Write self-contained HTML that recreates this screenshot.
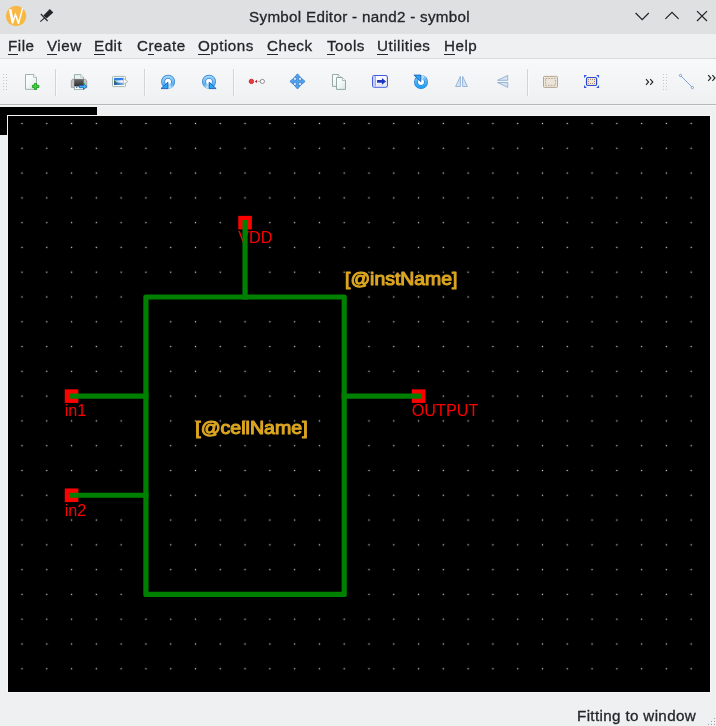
<!DOCTYPE html>
<html lang="en">
<head>
<meta charset="utf-8">
<title>Symbol Editor - nand2 - symbol</title>
<style>
*{box-sizing:border-box;margin:0;padding:0}
html,body{width:716px;height:726px;overflow:hidden}
body{position:relative;background:#eff0f1;font-family:"Liberation Sans","DejaVu Sans",sans-serif;color:#232629;font-size:15.2px;letter-spacing:0.5px}
.abs{position:absolute}
#titlebar{left:0;top:0;width:716px;height:34px;background:#dfe0e2}
#title{left:0;top:0;width:716px;height:33px;line-height:33px;text-align:center;letter-spacing:0.3px;padding-left:3px;white-space:nowrap}
#menubar{left:0;top:34px;width:716px;height:24px;background:#eff0f1}
.mi{position:absolute;top:37px;height:18px;line-height:18px;white-space:nowrap}
.mi u{text-decoration:none;border-bottom:1px solid #232629;padding-bottom:0}
#toolbar{left:0;top:59px;width:716px;height:45px;background:linear-gradient(#f8f9fa,#eff0f1)}
#tbline1{left:0;top:58px;width:716px;height:1px;background:#d9dadb}
#tbsep{left:0;top:104px;width:716px;height:1px;background:#b7b8b9}
#tbsep2{left:0;top:105px;width:716px;height:1px;background:#f7f8f8}
.vsep{position:absolute;top:69px;width:1px;height:27px;background:#d3d4d5}
.vsep:after{content:"";position:absolute;left:1px;top:0;width:1px;height:27px;background:#fafafa}
#blackbar{left:0;top:107px;width:97px;height:28px;background:#000}
#frame{left:7px;top:115px;width:704px;height:578px;background:#f6f6f7}
#canvas{left:8px;top:116px;width:702px;height:576px;background:#000}
#status{right:20px;top:706.5px;height:18px;line-height:18px;letter-spacing:0.35px;white-space:nowrap}
svg{position:absolute;overflow:visible;letter-spacing:0;will-change:transform}
#title,.mi,#status{-webkit-text-stroke:0.3px #232629;will-change:transform}
</style>
</head>
<body>
<div id="titlebar" class="abs"></div>
<div id="title" class="abs">Symbol Editor - nand2 - symbol</div>
<div id="menubar" class="abs"></div>
<div class="mi" style="left:7.6px"><u>F</u>ile</div>
<div class="mi" style="left:46.5px"><u>V</u>iew</div>
<div class="mi" style="left:94.3px"><u>E</u>dit</div>
<div class="mi" style="left:137px">C<u>r</u>eate</div>
<div class="mi" style="left:198px"><u>O</u>ptions</div>
<div class="mi" style="left:267px"><u>C</u>heck</div>
<div class="mi" style="left:326.8px"><u>T</u>ools</div>
<div class="mi" style="left:377px"><u>U</u>tilities</div>
<div class="mi" style="left:443.5px"><u>H</u>elp</div>
<div id="toolbar" class="abs"></div>
<div id="tbline1" class="abs"></div>
<div id="tbsep" class="abs"></div>
<div id="tbsep2" class="abs"></div>
<div class="vsep" style="left:55px"></div>
<div class="vsep" style="left:144px"></div>
<div class="vsep" style="left:233px"></div>
<div class="vsep" style="left:527px"></div>
<svg id="ico" style="left:0;top:0" width="716" height="726" viewBox="0 0 716 726">
<defs>
<linearGradient id="gPage" x1="0" y1="0" x2="1" y2="1"><stop offset="0" stop-color="#ffffff"/><stop offset="0.5" stop-color="#f1f8f7"/><stop offset="1" stop-color="#d6e7e4"/></linearGradient>
<linearGradient id="gBlue" x1="0" y1="0" x2="0" y2="1"><stop offset="0" stop-color="#8cc6f0"/><stop offset="1" stop-color="#2f86d4"/></linearGradient>
<linearGradient id="gBlue2" x1="0" y1="0" x2="0" y2="1"><stop offset="0" stop-color="#6fb3ea"/><stop offset="1" stop-color="#1f8fe0"/></linearGradient>
<linearGradient id="gOr" x1="0" y1="0" x2="1" y2="1"><stop offset="0" stop-color="#f9b54c"/><stop offset="1" stop-color="#f5bb3e"/></linearGradient>
<linearGradient id="gPr" x1="0" y1="0" x2="0" y2="1"><stop offset="0" stop-color="#6a6a6a"/><stop offset="1" stop-color="#2a2a2a"/></linearGradient>
<linearGradient id="gImg" x1="0" y1="0" x2="0" y2="1"><stop offset="0" stop-color="#2f6fd0"/><stop offset="0.5" stop-color="#8fc0e8"/><stop offset="0.55" stop-color="#3d7a4a"/><stop offset="1" stop-color="#1c5aa8"/></linearGradient>
<linearGradient id="gSea" x1="0" y1="0" x2="1" y2="0"><stop offset="0" stop-color="#1d4a9c"/><stop offset="1" stop-color="#86c4f0"/></linearGradient>
<linearGradient id="gFade" x1="0" y1="0" x2="1" y2="0"><stop offset="0" stop-color="#ffffff" stop-opacity="0"/><stop offset="0.7" stop-color="#ffffff" stop-opacity="1"/></linearGradient>
<linearGradient id="gRingA" x1="0" y1="0" x2="0" y2="1"><stop offset="0" stop-color="#9ad4f8"/><stop offset="1" stop-color="#4ea6ea"/></linearGradient>
<linearGradient id="gRingB" x1="0" y1="0" x2="0" y2="1"><stop offset="0" stop-color="#1ea2f6"/><stop offset="1" stop-color="#7cc0f0"/></linearGradient>
</defs>
<!-- app icon -->
<circle cx="16.1" cy="16" r="10.2" fill="url(#gOr)"/>
<path d="M8.8 9.4 L11.4 9.0 L13.3 18.8 L15.4 12.4 L18.6 20.6 L22.1 7.8 L23.3 8.2 L19.1 24.1 L17.9 24.1 L15.3 16.6 L13.3 23.6 L11.8 23.6 Z" fill="#fff"/>
<!-- pin -->
<g fill="#232629" stroke="none">
<path d="M49.8 9 L53.3 12.4 L46.6 18.6 L43.4 15.4 Z"/>
<path d="M41.2 13.6 L48 20.6 L47.2 21.4 L40.4 14.4 Z"/>
<path d="M44.6 17.2 L45.4 18 L40.6 22 L39.9 21.3 Z"/>
</g>
<!-- window buttons -->
<g fill="none" stroke="#232629" stroke-width="1.25">
<path d="M635.6 13 L642.2 19.6 L648.8 13"/>
<path d="M665.4 18.9 L672 12.3 L678.6 18.9"/>
<path d="M697 11.1 L707 21 M707 11.1 L697 21"/>
</g>
<!-- size grip -->
<g fill="#9c9d9e"><rect x="714" y="718" width="1" height="1"/><rect x="711" y="721" width="1" height="1"/><rect x="714" y="721" width="1" height="1"/><rect x="708" y="724" width="1" height="1"/><rect x="711" y="724" width="1" height="1"/><rect x="714" y="724" width="1" height="1"/></g>
<g fill="#fbfbfb"><rect x="715" y="719" width="1" height="1"/><rect x="712" y="722" width="1" height="1"/><rect x="715" y="722" width="1" height="1"/><rect x="709" y="725" width="1" height="1"/><rect x="712" y="725" width="1" height="1"/><rect x="715" y="725" width="1" height="1"/></g>
<!-- toolbar handles -->
<g fill="#c4c6c8">
<rect x="3" y="74" width="1" height="1"/><rect x="6" y="74" width="1" height="1"/>
<rect x="3" y="77" width="1" height="1"/><rect x="6" y="77" width="1" height="1"/>
<rect x="3" y="80" width="1" height="1"/><rect x="6" y="80" width="1" height="1"/>
<rect x="3" y="83" width="1" height="1"/><rect x="6" y="83" width="1" height="1"/>
<rect x="3" y="86" width="1" height="1"/><rect x="6" y="86" width="1" height="1"/>
<rect x="3" y="89" width="1" height="1"/><rect x="6" y="89" width="1" height="1"/>
<rect x="663" y="74" width="1" height="1"/><rect x="666" y="74" width="1" height="1"/>
<rect x="663" y="77" width="1" height="1"/><rect x="666" y="77" width="1" height="1"/>
<rect x="663" y="80" width="1" height="1"/><rect x="666" y="80" width="1" height="1"/>
<rect x="663" y="83" width="1" height="1"/><rect x="666" y="83" width="1" height="1"/>
<rect x="663" y="86" width="1" height="1"/><rect x="666" y="86" width="1" height="1"/>
<rect x="663" y="89" width="1" height="1"/><rect x="666" y="89" width="1" height="1"/>
</g>
<!-- 1 new doc -->
<g>
<path d="M25.5 74.5 H33.6 L36.5 77.4 V89.3 H25.5 Z" fill="url(#gPage)" stroke="#96a8a4" stroke-width="0.9" stroke-linejoin="round"/>
<path d="M33.6 74.5 V77.4 H36.5" fill="#fff" stroke="#96a8a4" stroke-width="0.7"/>
<path d="M34.4 83.6 H36.6 V85.3 H38.9 V87.5 H36.6 V89.4 H34.4 V87.5 H32.4 V85.3 H34.4 Z" fill="#3ed23c" stroke="#1c9a20" stroke-width="0.9" stroke-linejoin="round"/>
</g>
<!-- 2 print -->
<g>
<path d="M74.5 74.6 H80.8 L83.5 77.2 V80 H74.5 Z" fill="#e9f5f3" stroke="#8fa5a0" stroke-width="0.9"/>
<path d="M80.8 74.6 V77.2 H83.5" fill="#fff" stroke="#8fa5a0" stroke-width="0.6"/>
<path d="M72.4 79.3 H85.6 L86.8 81.2 V87.6 H71.3 V81.2 Z" fill="#c3c3c8" stroke="#909094" stroke-width="0.7"/>
<rect x="74.2" y="79.2" width="9.5" height="7.4" fill="url(#gPr)"/>
<rect x="74.5" y="86.6" width="9" height="3" fill="#fdfdfd" stroke="#8fa5a0" stroke-width="0.8"/>
<rect x="76" y="86.9" width="1.5" height="0.9" fill="#2a56c6"/>
<rect x="83.9" y="82.8" width="1.3" height="1.3" fill="#3fcf5a"/>
<path d="M79.3 85.5 H83.5 V83.7 L87 86.6 L83.5 89.5 V87.7 H79.3 Z" fill="#45b4f4" stroke="#1a63b8" stroke-width="0.9" stroke-linejoin="round"/>
</g>
<!-- 3 export image -->
<g>
<rect x="112.5" y="76.4" width="13" height="10.2" rx="0.8" fill="#f7fbfa" stroke="#9db0ac" stroke-width="0.9"/>
<rect x="114" y="77.9" width="10" height="7" fill="#2f7de6"/>
<rect x="114" y="80.3" width="10" height="2.4" fill="#a9cdf2"/>
<rect x="114" y="82.6" width="10" height="2.3" fill="url(#gSea)"/>
<path d="M114 80.2 C115.4 80.6 116 82 117.6 82.7 H114 Z" fill="#2f6d3f"/>
<rect x="116" y="80.4" width="8" height="2.2" fill="url(#gFade)"/>
<path d="M123.3 78.5 L128 81.5 L123.3 84.5 Z" fill="#ffffff" stroke="#9fadab" stroke-width="0.7" stroke-linejoin="round"/>
</g>
<!-- 4 undo -->
<g transform="translate(168.1 81.7) scale(1 1)"><circle cx="0" cy="0" r="5" fill="#fbfdff" stroke="#2f7fd2" stroke-width="4"/><circle cx="0" cy="0" r="5" fill="none" stroke="url(#gRingA)" stroke-width="2.6"/><path d="M3.94 3.08 A5 5 0 0 1 2.35 4.41" fill="none" stroke="#7fc2f0" stroke-width="4"/><path d="M2.50 4.33 A5 5 0 0 1 -0.17 5.00" fill="none" stroke="#b9e0f9" stroke-width="4"/><path d="M-7.1 6.9 H-0.2 V0.4 Z" fill="#2aa4f6" stroke="#1c62b4" stroke-width="0.9" stroke-linejoin="miter"/></g>
<!-- 5 redo -->
<g transform="translate(209.0 81.7) scale(-1 1)"><circle cx="0" cy="0" r="5" fill="#fbfdff" stroke="#2f7fd2" stroke-width="4"/><circle cx="0" cy="0" r="5" fill="none" stroke="url(#gRingA)" stroke-width="2.6"/><path d="M3.94 3.08 A5 5 0 0 1 2.35 4.41" fill="none" stroke="#7fc2f0" stroke-width="4"/><path d="M2.50 4.33 A5 5 0 0 1 -0.17 5.00" fill="none" stroke="#b9e0f9" stroke-width="4"/><path d="M-7.1 6.9 H-0.2 V0.4 Z" fill="#2aa4f6" stroke="#1c62b4" stroke-width="0.9" stroke-linejoin="miter"/></g>
<!-- 6 red dot arrow -->
<g>
<circle cx="251.4" cy="81.4" r="2.2" fill="#ee3a40" stroke="#b81c24" stroke-width="0.8"/>
<path d="M254.8 81.4 L257 79.8 V83 Z" fill="#b8222a"/>
<path d="M257.6 81.4 H260" stroke="#9a9a9a" stroke-width="0.8"/>
<circle cx="262.4" cy="81.4" r="2.1" fill="#fafafa" stroke="#8e8e8e" stroke-width="1"/>
</g>
<!-- 7 move -->
<g fill="#ffffff"><rect x="293.9" y="77.9" width="2.2" height="2.2"/><rect x="298.7" y="77.9" width="2.2" height="2.2"/><rect x="293.9" y="82.7" width="2.2" height="2.2"/><rect x="298.7" y="82.7" width="2.2" height="2.2"/></g>
<g fill="#4ea3ec" stroke="#2a72c8" stroke-width="0.7" transform="translate(0.2 0)">
<path d="M297.3 73.8 L300.6 77.6 H298.5 V80.2 H301.1 V78.1 L304.9 81.4 L301.1 84.7 V82.6 H298.5 V85.2 H300.6 L297.3 89 L294 85.2 H296.1 V82.6 H293.5 V84.7 L289.7 81.4 L293.5 78.1 V80.2 H296.1 V77.6 H294 Z"/>
</g>
<!-- 8 copy -->
<g stroke-linejoin="round">
<path d="M332.5 74.5 H338.2 L341.2 77.4 V86.4 H332.5 Z" fill="url(#gPage)" stroke="#8aa09c" stroke-width="0.9"/>
<path d="M338.2 74.5 V77.4 H341.2" fill="#fff" stroke="#8aa09c" stroke-width="0.7"/>
<path d="M336.5 77.5 H342.4 L345.5 80.5 V89.4 H336.5 Z" fill="url(#gPage)" stroke="#8aa09c" stroke-width="0.9"/>
<path d="M342.4 77.5 V80.5 H345.5" fill="#fff" stroke="#8aa09c" stroke-width="0.7"/>
</g>
<!-- 9 import -->
<g>
<rect x="372.6" y="75.5" width="14.8" height="11.8" rx="1.9" fill="#fbfbff" stroke="#4059e2" stroke-width="1.1"/>
<rect x="373.3" y="76.2" width="2.2" height="10.4" fill="#c3cdf5"/>
<rect x="375.2" y="76.2" width="0.8" height="10.4" fill="#8c9be8"/>
<rect x="376.4" y="83.6" width="10" height="2.4" fill="#e6e8f6"/>
<path d="M377.1 80.1 H381.9 V78 L386.1 81.4 L381.9 84.8 V82.7 H377.1 Z" fill="#1d38be"/>
</g>
<!-- 10 rotate -->
<g transform="translate(421.0 82.0) scale(1 -1)"><circle cx="0" cy="0" r="5" fill="#fbfdff" stroke="#2f7fd2" stroke-width="4"/><circle cx="0" cy="0" r="5" fill="none" stroke="url(#gRingB)" stroke-width="2.6"/><path d="M3.94 3.08 A5 5 0 0 1 2.35 4.41" fill="none" stroke="#7fc2f0" stroke-width="4"/><path d="M2.50 4.33 A5 5 0 0 1 -0.17 5.00" fill="none" stroke="#b9e0f9" stroke-width="4"/><path d="M-7.1 6.9 H-0.2 V0.4 Z" fill="#2aa4f6" stroke="#1c62b4" stroke-width="0.9" stroke-linejoin="miter"/></g>
<!-- 11 flip h -->
<g fill="#d7e3f1" stroke="#8fb0d6" stroke-width="0.9">
<path d="M460.4 76.4 V86.5 H455.6 Z"/>
<path d="M462.6 76.4 V86.5 H467.4 Z"/>
</g>
<!-- 12 flip v -->
<g fill="#d7e3f1" stroke="#8fb0d6" stroke-width="0.9">
<path d="M507.7 75.4 V80.3 H497.6 Z"/>
<path d="M507.7 87.4 V82.5 H497.6 Z"/>
</g>
<!-- 13 select rect -->
<g>
<rect x="543.5" y="76.4" width="14" height="11" rx="0.8" fill="#ece6da" stroke="#b7a592" stroke-width="1"/>
<rect x="545.6" y="78.5" width="9.8" height="6.8" fill="none" stroke="#a8957f" stroke-width="0.8" stroke-dasharray="1.6 1.2"/>
</g>
<!-- 14 zoom fit -->
<g>
<path d="M584 75 H587 L584 78 Z M599.1 75 H596.1 L599.1 78 Z M584 88 H587 L584 85 Z M599.1 88 H596.1 L599.1 85 Z" fill="#3557e4"/>
<rect x="586.5" y="77.5" width="10.1" height="8" rx="1.2" fill="#efe6d6" stroke="#2c4bd0" stroke-width="1.2"/>
<g fill="#a58d77"><rect x="588" y="79" width="1" height="1"/><rect x="590" y="79" width="1" height="1"/><rect x="592" y="79" width="1" height="1"/><rect x="594" y="79" width="1" height="1"/><rect x="588" y="81" width="1" height="1"/><rect x="594" y="81" width="1" height="1"/><rect x="588" y="83" width="1" height="1"/><rect x="590" y="83" width="1" height="1"/><rect x="592" y="83" width="1" height="1"/><rect x="594" y="83" width="1" height="1"/></g>
</g>
<!-- 15 chevrons -->
<g fill="none" stroke="#232629" stroke-width="1.15">
<path d="M646 79.2 L648.6 82 L646 84.8 M650.2 79.2 L652.8 82 L650.2 84.8"/>
<path d="M708.2 75.2 L710.8 78 L708.2 80.8 M712.4 75.2 L715 78 L712.4 80.8"/>
</g>
<!-- 17 line -->
<g>
<path d="M681.2 76.2 L691.8 86.8" stroke="#7a9fd4" stroke-width="0.95"/>
<circle cx="680.5" cy="75.5" r="1.1" fill="#fff" stroke="#5d8acb" stroke-width="0.8"/>
<circle cx="692.4" cy="87.5" r="1.1" fill="#fff" stroke="#5d8acb" stroke-width="0.8"/>
</g>

</svg>
<div id="blackbar" class="abs"></div>
<div id="frame" class="abs"></div>
<div id="canvas" class="abs"></div>
<svg id="sch" style="left:0;top:0" width="716" height="726" viewBox="0 0 716 726">
<defs>
<pattern id="grid" x="9.6075" y="111.1075" width="24.785" height="24.785" patternUnits="userSpaceOnUse">
<rect x="11.7425" y="11.7425" width="1.3" height="1.3" fill="#c4c4c4"/>
</pattern>
<clipPath id="cv"><rect x="8" y="116" width="702" height="576"/></clipPath>
</defs>
<g clip-path="url(#cv)">
<rect x="8" y="116" width="702" height="576" fill="url(#grid)"/>
<rect x="238.26" y="215.84" width="13.6" height="13.6" fill="#ff0000"/><rect x="64.77" y="389.33" width="13.6" height="13.6" fill="#ff0000"/><rect x="64.77" y="488.47" width="13.6" height="13.6" fill="#ff0000"/><rect x="411.76" y="389.33" width="13.6" height="13.6" fill="#ff0000"/>
<g font-family="'Liberation Sans','DejaVu Sans',sans-serif" font-size="16.2" fill="#ff0000" letter-spacing="0">
<text x="238.26" y="242.74">VDD</text>
<text x="64.77" y="416.43">in1</text>
<text x="64.77" y="515.57">in2</text>
<text x="411.76" y="416.43">OUTPUT</text>
</g>
<g stroke="#008000" stroke-width="5.2" fill="none" stroke-linecap="square" stroke-linejoin="round">
<rect x="145.93" y="297.0" width="198.28" height="297.42"/>
<path d="M245.06 222.64V297.0"/>
<path d="M71.57 396.13H145.93"/>
<path d="M71.57 495.27H145.93"/>
<path d="M344.2 396.13H418.56"/>
</g>
<g font-family="'Liberation Sans','DejaVu Sans',sans-serif" font-size="18.2" fill="#daa520" stroke="#daa520" stroke-width="1.1" stroke-linejoin="round" letter-spacing="0">
<text x="345" y="285.3" textLength="112.4" lengthAdjust="spacingAndGlyphs">[@instName]</text>
<text x="195.2" y="433.8" textLength="112.4" lengthAdjust="spacingAndGlyphs">[@cellName]</text>
</g>
</g>
</svg>
<div id="status" class="abs">Fitting to window</div>
</body>
</html>
